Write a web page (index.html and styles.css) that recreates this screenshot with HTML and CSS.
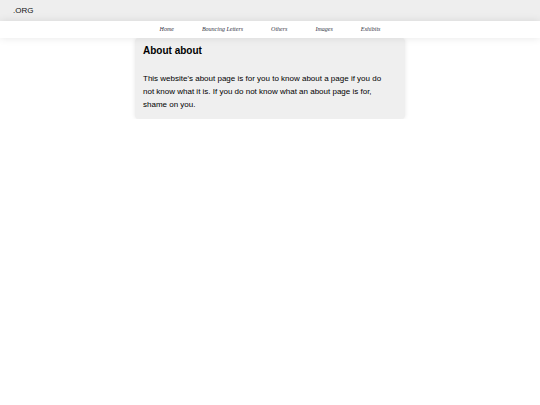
FILE: index.html
```
<!DOCTYPE html>
<html lang="en">
<head>
<meta charset="utf-8">
<title>About</title>
<link rel="stylesheet" href="styles.css">
</head>
<body>
<header class="brand">.ORG</header>
<nav class="menu">
<a href="#">Home</a>
<a href="#">Bouncing Letters</a>
<a href="#">Others</a>
<a href="#">Images</a>
<a href="#">Exhibits</a>
</nav>
<main class="card">
<h1>About about</h1>
<p>This website's about page is for you to know about a page if you do not know what it is. If you do not know what an about page is for, shame on you.</p>
</main>
</body>
</html>
```
FILE: styles.css
```
body {
  margin: 0;
  background: #fff;
  color: #000;
  font-family: "Liberation Sans", Arial, sans-serif;
}

.brand {
  padding: 4px 13px;
  background: #eee;
  color: #111;
  font-size: 8px;
  line-height: 13px;
}

.menu {
  position: relative;
  display: flex;
  justify-content: center;
  gap: 28px;
  padding: 2px 0;
  background: #fff;
  box-shadow: 0 0 8px rgba(0, 0, 0, 0.1);
  font-family: "Liberation Serif", "Times New Roman", serif;
  font-size: 6px;
  font-style: italic;
  line-height: 13px;
}

.menu a {
  color: #334;
  text-decoration: none;
}

.card {
  box-sizing: border-box;
  width: 50%;
  margin: 0 auto;
  padding: 6px 8px 8px;
  border-radius: 4px;
  background: #efefef;
  box-shadow: 0 0 4px rgba(0, 0, 0, 0.1);
  font-size: 8px;
  line-height: 13px;
}

.card h1 {
  margin: 0 0 15px;
  font-size: 10px;
  line-height: 13px;
}

.card p {
  margin: 0;
  padding-right: 8px;
}
```
